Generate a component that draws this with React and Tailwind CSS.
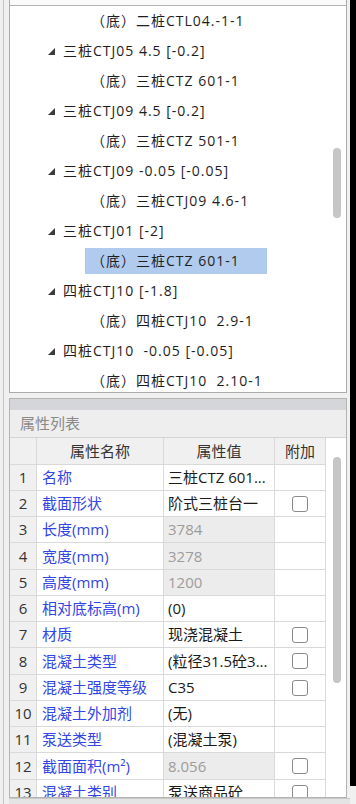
import React from 'react';

const treeItems = [
  { child: true, text: '（底）二桩CTL04.-1-1' },
  { child: false, text: '三桩CTJ05 4.5 [-0.2]' },
  { child: true, text: '（底）三桩CTZ 601-1' },
  { child: false, text: '三桩CTJ09 4.5 [-0.2]' },
  { child: true, text: '（底）三桩CTZ 501-1' },
  { child: false, text: '三桩CTJ09 -0.05 [-0.05]' },
  { child: true, text: '（底）三桩CTJ09 4.6-1' },
  { child: false, text: '三桩CTJ01  [-2]' },
  { child: true, text: '（底）三桩CTZ 601-1', selected: true },
  { child: false, text: '四桩CTJ10 [-1.8]' },
  { child: true, text: '（底）四桩CTJ10\u00a0\u00a02.9-1' },
  { child: false, text: '四桩CTJ10\u00a0\u00a0-0.05 [-0.05]' },
  { child: true, text: '（底）四桩CTJ10\u00a0\u00a02.10-1' },
];

const props = [
  { n: 1, name: '名称', value: '三桩CTZ 601...' },
  { n: 2, name: '截面形状', value: '阶式三桩台一', box: true },
  { n: 3, name: '长度(mm)', value: '3784', dis: true },
  { n: 4, name: '宽度(mm)', value: '3278', dis: true, tall: true },
  { n: 5, name: '高度(mm)', value: '1200', dis: true },
  { n: 6, name: '相对底标高(m)', value: '(0)' },
  { n: 7, name: '材质', value: '现浇混凝土', box: true },
  { n: 8, name: '混凝土类型', value: '(粒径31.5砼3...', box: true, tall: true },
  { n: 9, name: '混凝土强度等级', value: 'C35', box: true },
  { n: 10, name: '混凝土外加剂', value: '(无)' },
  { n: 11, name: '泵送类型', value: '(混凝土泵)' },
  { n: 12, name: '截面面积(m²)', value: '8.056', dis: true, box: true, tall: true },
  { n: 13, name: '混凝土类别', value: '泵送商品砼', box: true },
];

const Expander = () => (
  <svg width="7" height="7" viewBox="0 0 7 7" className="shrink-0">
    <polygon points="7,0 7,7 0,7" fill="#3a3a3a" />
  </svg>
);

const TreeRow = ({ item }) =>
  item.child ? (
    <div className="h-[30px] flex items-center pl-[75px]">
      <div
        className={`h-[26px] flex items-center pl-[6px] whitespace-nowrap ${item.selected ? 'w-[182px] bg-[#b0cbed]' : ''}`}
      >
        {item.text}
      </div>
    </div>
  ) : (
    <div className="h-[30px] flex items-center pl-[38px] gap-[8px] whitespace-nowrap">
      <Expander />
      <span>{item.text}</span>
    </div>
  );

const Check = () => (
  <div className="w-[16px] h-[16px] rounded-[3px] border border-[#8a8a8a] bg-white" />
);

const PropRow = ({ row }) => (
  <div className={`grid grid-cols-[27px_127px_111px_51px] shrink-0 ${row.tall ? 'h-[27px]' : 'h-[26px]'}`}>
    <div className="bg-[#f0f0f0] border-r border-b border-[#d9d9d9] flex items-center justify-center text-[#333]">
      {row.n}
    </div>
    <div className="bg-white border-r border-b border-[#d9d9d9] flex items-center pl-[5px] text-[#3246e6] whitespace-nowrap overflow-hidden">
      {row.name}
    </div>
    <div
      className={`border-r border-b border-[#d9d9d9] flex items-center pl-[4px] whitespace-nowrap overflow-hidden ${row.dis ? 'bg-[#ececec] text-[#9c9c9c]' : 'bg-white text-[#1a1a1a]'}`}
    >
      {row.value}
    </div>
    <div className="bg-white border-r border-b border-[#d9d9d9] flex items-center justify-center">
      {row.box && <Check />}
    </div>
  </div>
);

export default function App() {
  return (
    <div
      className="w-[356px] h-[804px] bg-[#f0f0f0] flex overflow-hidden"
      style={{ fontFamily: '"Open Sans", "Noto Sans CJK SC", sans-serif' }}
    >
      <div className="w-[350px] h-full">
        <div className="ml-[3px] h-full border-l border-[#c4c4c4] pl-[5px] flex flex-col">
          {/* tree panel */}
          <div className="w-[338px] h-[393px] shrink-0 border-l border-r border-b border-[#ababab] bg-white flex flex-col relative">
            <div className="h-[6px] shrink-0 overflow-hidden border-b border-[#b4b4b4] bg-[#fafafa]">
              <div className="mt-[-16px] pl-[4px] text-[14px] text-[#b0b0b0] leading-[18px]">构件列表</div>
            </div>
            <div className="flex-1 overflow-hidden text-[14px] tracking-[1px] text-[#1e1e1e] leading-none">
              {treeItems.map((item, i) => (
                <TreeRow key={i} item={item} />
              ))}
            </div>
            <div className="absolute left-[323px] top-[148px] w-[8px] h-[70px] rounded-full bg-[#c6c6c6]" />
          </div>

          {/* property panel */}
          <div className="mt-[5px] w-[338px] h-[400px] shrink-0 border border-[#b4b4b4] bg-white flex flex-col relative overflow-hidden text-[15px] leading-none">
            <div className="h-[11px] shrink-0 bg-[#d5d6d9]" />
            <div className="h-[27px] shrink-0 bg-[#eeeeee] flex items-center pl-[10px] text-[#8a8a8a]">属性列表</div>
            <div className="grid grid-cols-[27px_127px_111px_51px] h-[28px] shrink-0 border-t border-[#d4d4d4]">
              <div className="bg-[#f0f0f0] border-r border-b border-[#d9d9d9]" />
              <div className="bg-[#f0f0f0] border-r border-b border-[#d9d9d9] flex items-center justify-center text-[#333]">属性名称</div>
              <div className="bg-[#f0f0f0] border-r border-b border-[#d9d9d9] flex items-center justify-center text-[#333]">属性值</div>
              <div className="bg-[#f0f0f0] border-r border-b border-[#d9d9d9] flex items-center justify-center text-[#333]">附加</div>
            </div>
            {props.map((row) => (
              <PropRow key={row.n} row={row} />
            ))}
            <div className="absolute left-[323px] top-[58px] w-[8px] h-[226px] rounded-full bg-[#c6c6c6]" />
          </div>
          <div className="flex-1 border-t border-[#c8c8c8] bg-[#e4e4e4]" />
        </div>
      </div>
      <div className="w-[6px] h-[786px] bg-black" />
    </div>
  );
}
